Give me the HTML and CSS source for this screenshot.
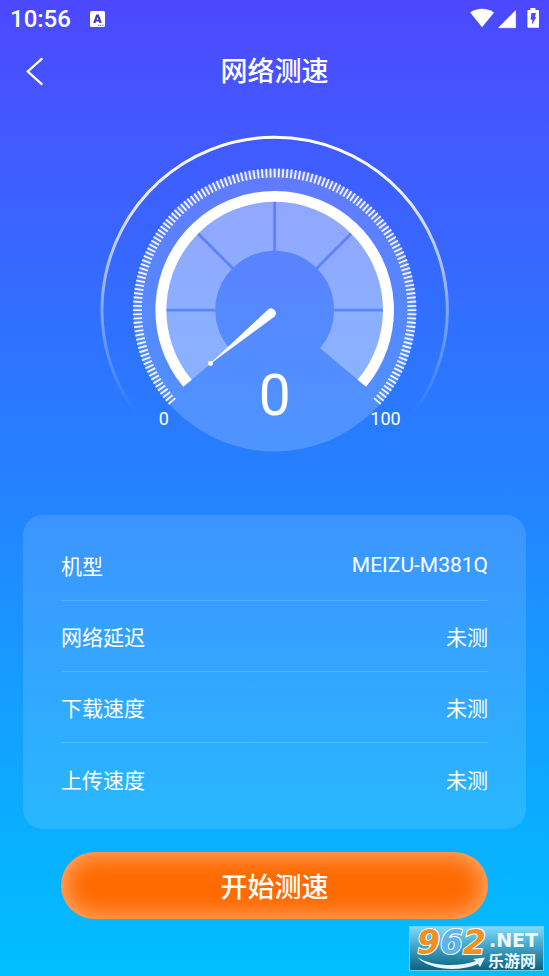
FILE: index.html
```html
<!DOCTYPE html>
<html lang="zh-CN">
<head>
    <meta charset="UTF-8">
    <meta name="viewport" content="width=device-width, initial-scale=1.0">
    <title>网络测速</title>
    <link rel="stylesheet" href="styles.css">
</head>
<body>
    <!-- Status bar -->
    <div class="status-bar">
        <span class="time">10:56</span>
        <svg class="icon-app" width="15" height="16" viewBox="0 0 15 16">
            <rect width="15" height="16" rx="1.5" fill="#fff"/>
            <path d="M3.2 12 6.2 3.6H8.8L11.8 12H9.5L9 10.4H6L5.5 12ZM6.6 8.7H8.4L7.5 5.9Z" fill="#3a3cb8" fill-rule="evenodd"/>
            <path d="M8 14.3h1.2M10.2 14.3h1.2M12.4 14.3h1.2" stroke="#4a4cff" stroke-width="1"/>
        </svg>
        <div class="status-icons">
            <svg width="70" height="22" viewBox="0 0 70 22">
                <path d="M0.2 4.6C7 -0.4 17.2 -0.4 24 4.6L12.1 19.2Z" fill="#fff"/>
                <path d="M28.6 19.7 45.6 2.6V19.7Z" fill="#fff" stroke="#fff" stroke-width="0.6" stroke-linejoin="round"/>
                <path d="M60.4 2V0h5v2H68q1 0 1 1V18.7q0 1-1 1H58.4q-1 0-1-1V3q0-1 1-1Z" fill="#fff"/>
                <path d="M61.4 5h4.6L64.8 9h1.6L61.8 17 62.4 11.8H60.6Z" fill="#4a4cff"/>
            </svg>
        </div>
    </div>

    <header class="header">
        <button class="back-btn" aria-label="返回">
            <svg width="18" height="30" viewBox="0 0 18 30">
                <path d="M16.3 1.3 1.8 14.5 16.3 27.7" fill="none" stroke="#fff" stroke-width="2.3"/>
            </svg>
        </button>
        <h1 class="title">网络测速</h1>
    </header>

    <main>
        <!-- Gauge -->
        <svg class="gauge" viewBox="0 0 352 320">
            <defs>
                <linearGradient id="ring-fade" gradientUnits="userSpaceOnUse" x1="0" y1="3" x2="0" y2="280">
                    <stop offset="0" stop-color="#fff"/>
                    <stop offset="0.2" stop-color="#fff" stop-opacity="0.9"/>
                    <stop offset="0.6" stop-color="#fff" stop-opacity="0.42"/>
                    <stop offset="1" stop-color="#fff" stop-opacity="0"/>
                </linearGradient>
            </defs>
            <path d="M36 278A173 173 0 1 1 316 278" fill="none" stroke="url(#ring-fade)" stroke-width="3"/>
            <circle cx="176" cy="176.5" r="141.5" fill="#fff" fill-opacity="0.18"/>
            <path id="ticks" fill="none" stroke="#fff" stroke-opacity="0.9" stroke-width="1.9"/>
            <g id="segments" fill="#fff" fill-opacity="0.32"></g>
            <path id="arc" fill="none" stroke="#fff" stroke-width="11"/>
            <path d="M112 229.6 169.7 175.8A4.6 4.6 0 0 1 175.6 182.8Z" fill="#fff" stroke="#fff" stroke-width="0.5"/>
            <circle cx="111.7" cy="230" r="2.5" fill="#fff"/>
            <text class="gauge-value" x="176" y="282">0</text>
            <text class="gauge-label" x="65" y="292">0</text>
            <text class="gauge-label" x="287" y="292">100</text>
        </svg>

        <!-- Results -->
        <dl class="card">
            <div class="row"><dt>机型</dt><dd>MEIZU-M381Q</dd></div>
            <div class="row"><dt>网络延迟</dt><dd>未测</dd></div>
            <div class="row"><dt>下载速度</dt><dd>未测</dd></div>
            <div class="row"><dt>上传速度</dt><dd>未测</dd></div>
        </dl>

        <button class="start-btn">开始测速</button>
    </main>

    <!-- Site badge -->
    <svg class="badge" width="135" height="45" viewBox="0 0 135 45">
        <defs>
            <linearGradient id="badge-bg" x1="0" y1="0" x2="0" y2="1">
                <stop offset="0" stop-color="#7ddcff"/>
                <stop offset="0.5" stop-color="#3f9fc0"/>
                <stop offset="1" stop-color="#066282"/>
            </linearGradient>
        </defs>
        <rect x="0.5" y="0.5" width="134" height="44" fill="url(#badge-bg)" stroke="#70cdec"/>
        <text class="badge-num" x="8" y="28"><tspan fill="#f09020">9</tspan><tspan fill="#5bb4ec">6</tspan><tspan fill="#f09020">2</tspan></text>
        <path d="M8 31C24 41 50 41 67 35L64 33 76 31.5 71 41 69 38C50 46 22 45 8 31Z" fill="#e8f6fc"/>
        <text class="badge-net" x="80" y="21">.NET</text>
        <text class="badge-cn" x="79" y="41">乐游网</text>
    </svg>

    <script src="gauge.js"></script>
</body>
</html>
```
FILE: styles.css
```css
* {
    box-sizing: border-box;
}
body {
    margin: 0;
    min-height: 100vh;
    position: relative;
    color: white;
    font-family: Roboto, "Noto Sans CJK SC", sans-serif;
    background: linear-gradient(#4c48ff 0%, #4358ff 13%, #3070ff 33%, #2482ff 50%, #1899ff 68%, #0bacff 83%, #00bfff 100%);
}
button {
    border: none;
    color: inherit;
    font-family: inherit;
    cursor: pointer;
}

/* Status bar */
.status-bar {
    display: flex;
    align-items: center;
    height: 38px;
    padding: 0 9px 0 10px;
}
.time {
    font-size: 24px;
    font-weight: 500;
    line-height: 38px;
}
.icon-app {
    margin-left: 19px;
}
.status-icons {
    display: flex;
    margin-left: auto;
}

/* Header */
.header {
    display: grid;
    grid-template-columns: 44px 1fr 44px;
    align-items: center;
    height: 66px;
    padding: 2px 13px 0;
}
.back-btn {
    display: flex;
    justify-content: center;
    padding: 0;
    background: none;
}
.title {
    margin: 0;
    font-size: 27px;
    font-weight: 500;
    line-height: 40px;
    text-align: center;
}

/* Gauge */
.gauge {
    display: block;
    width: 64%;
    margin: 30px auto 0;
}
.gauge text {
    fill: white;
    text-anchor: middle;
}
.gauge-value {
    font-size: 57px;
}
.gauge-label {
    font-size: 18px;
}

/* Results */
.card {
    margin: 62px 23px 0;
    padding: 15px 38px;
    border-radius: 20px;
    background: rgba(255, 255, 255, 0.12);
}
.row {
    display: flex;
    justify-content: space-between;
    align-items: center;
    height: 71px;
    border-bottom: 1px solid rgba(255, 255, 255, 0.17);
    font-size: 21px;
}
.row:last-child {
    border-bottom: none;
}
.row dd {
    margin: 0;
}

.start-btn {
    display: block;
    width: calc(100% - 122px);
    height: 67px;
    margin: 23px auto 0;
    border-radius: 34px;
    background: #ff6a00;
    box-shadow: inset 0 0 26px rgba(255, 255, 255, 0.55);
    font-size: 27px;
    font-weight: 500;
}

/* Site badge */
.badge {
    position: absolute;
    right: 5px;
    bottom: 5px;
    overflow: visible;
}
.badge-num {
    font: italic bold 33px "DejaVu Sans", sans-serif;
    stroke: white;
    stroke-width: 2px;
    paint-order: stroke;
}
.badge-net {
    fill: #eef8fc;
    font: bold 19px "DejaVu Sans", sans-serif;
}
.badge-cn {
    fill: #eef8fc;
    font: bold 16px "Noto Sans CJK SC", sans-serif;
}
```
FILE: gauge.js
```js
const CX = 176;
const CY = 176.5;

// Angles in degrees, 0 = top, clockwise
function point(r, deg) {
    const a = deg * Math.PI / 180;
    return `${CX + r * Math.sin(a)} ${CY - r * Math.cos(a)}`;
}

function arcPath(r, from, to) {
    const large = to - from > 180 ? 1 : 0;
    return `M${point(r, from)}A${r} ${r} 0 ${large} 1 ${point(r, to)}`;
}

document.getElementById('arc').setAttribute('d', arcPath(114, -130, 130));

// Tick marks
let ticks = '';
for (let i = 0; i <= 152; i++) {
    const deg = -131.5 + i * 263 / 152;
    ticks += `M${point(133, deg)}L${point(142, deg)}`;
}
document.getElementById('ticks').setAttribute('d', ticks);

// Segments between the divider lines, each edge trimmed by a constant width
function segment(from, to) {
    const outer = 109;
    const inner = 59.5;
    const gap = 1.4;
    const trim = r => Math.asin(gap / r) * 180 / Math.PI;
    const start = r => from === -130 ? from : from + trim(r);
    const end = r => to === 130 ? to : to - trim(r);
    return `M${point(outer, start(outer))}A${outer} ${outer} 0 0 1 ${point(outer, end(outer))}` +
        `L${point(inner, end(inner))}A${inner} ${inner} 0 0 0 ${point(inner, start(inner))}Z`;
}

const group = document.getElementById('segments');
const stops = [-130, -90, -45, 0, 45, 90, 130];
for (let i = 0; i < stops.length - 1; i++) {
    const path = document.createElementNS('http://www.w3.org/2000/svg', 'path');
    path.setAttribute('d', segment(stops[i], stops[i + 1]));
    group.appendChild(path);
}
```
